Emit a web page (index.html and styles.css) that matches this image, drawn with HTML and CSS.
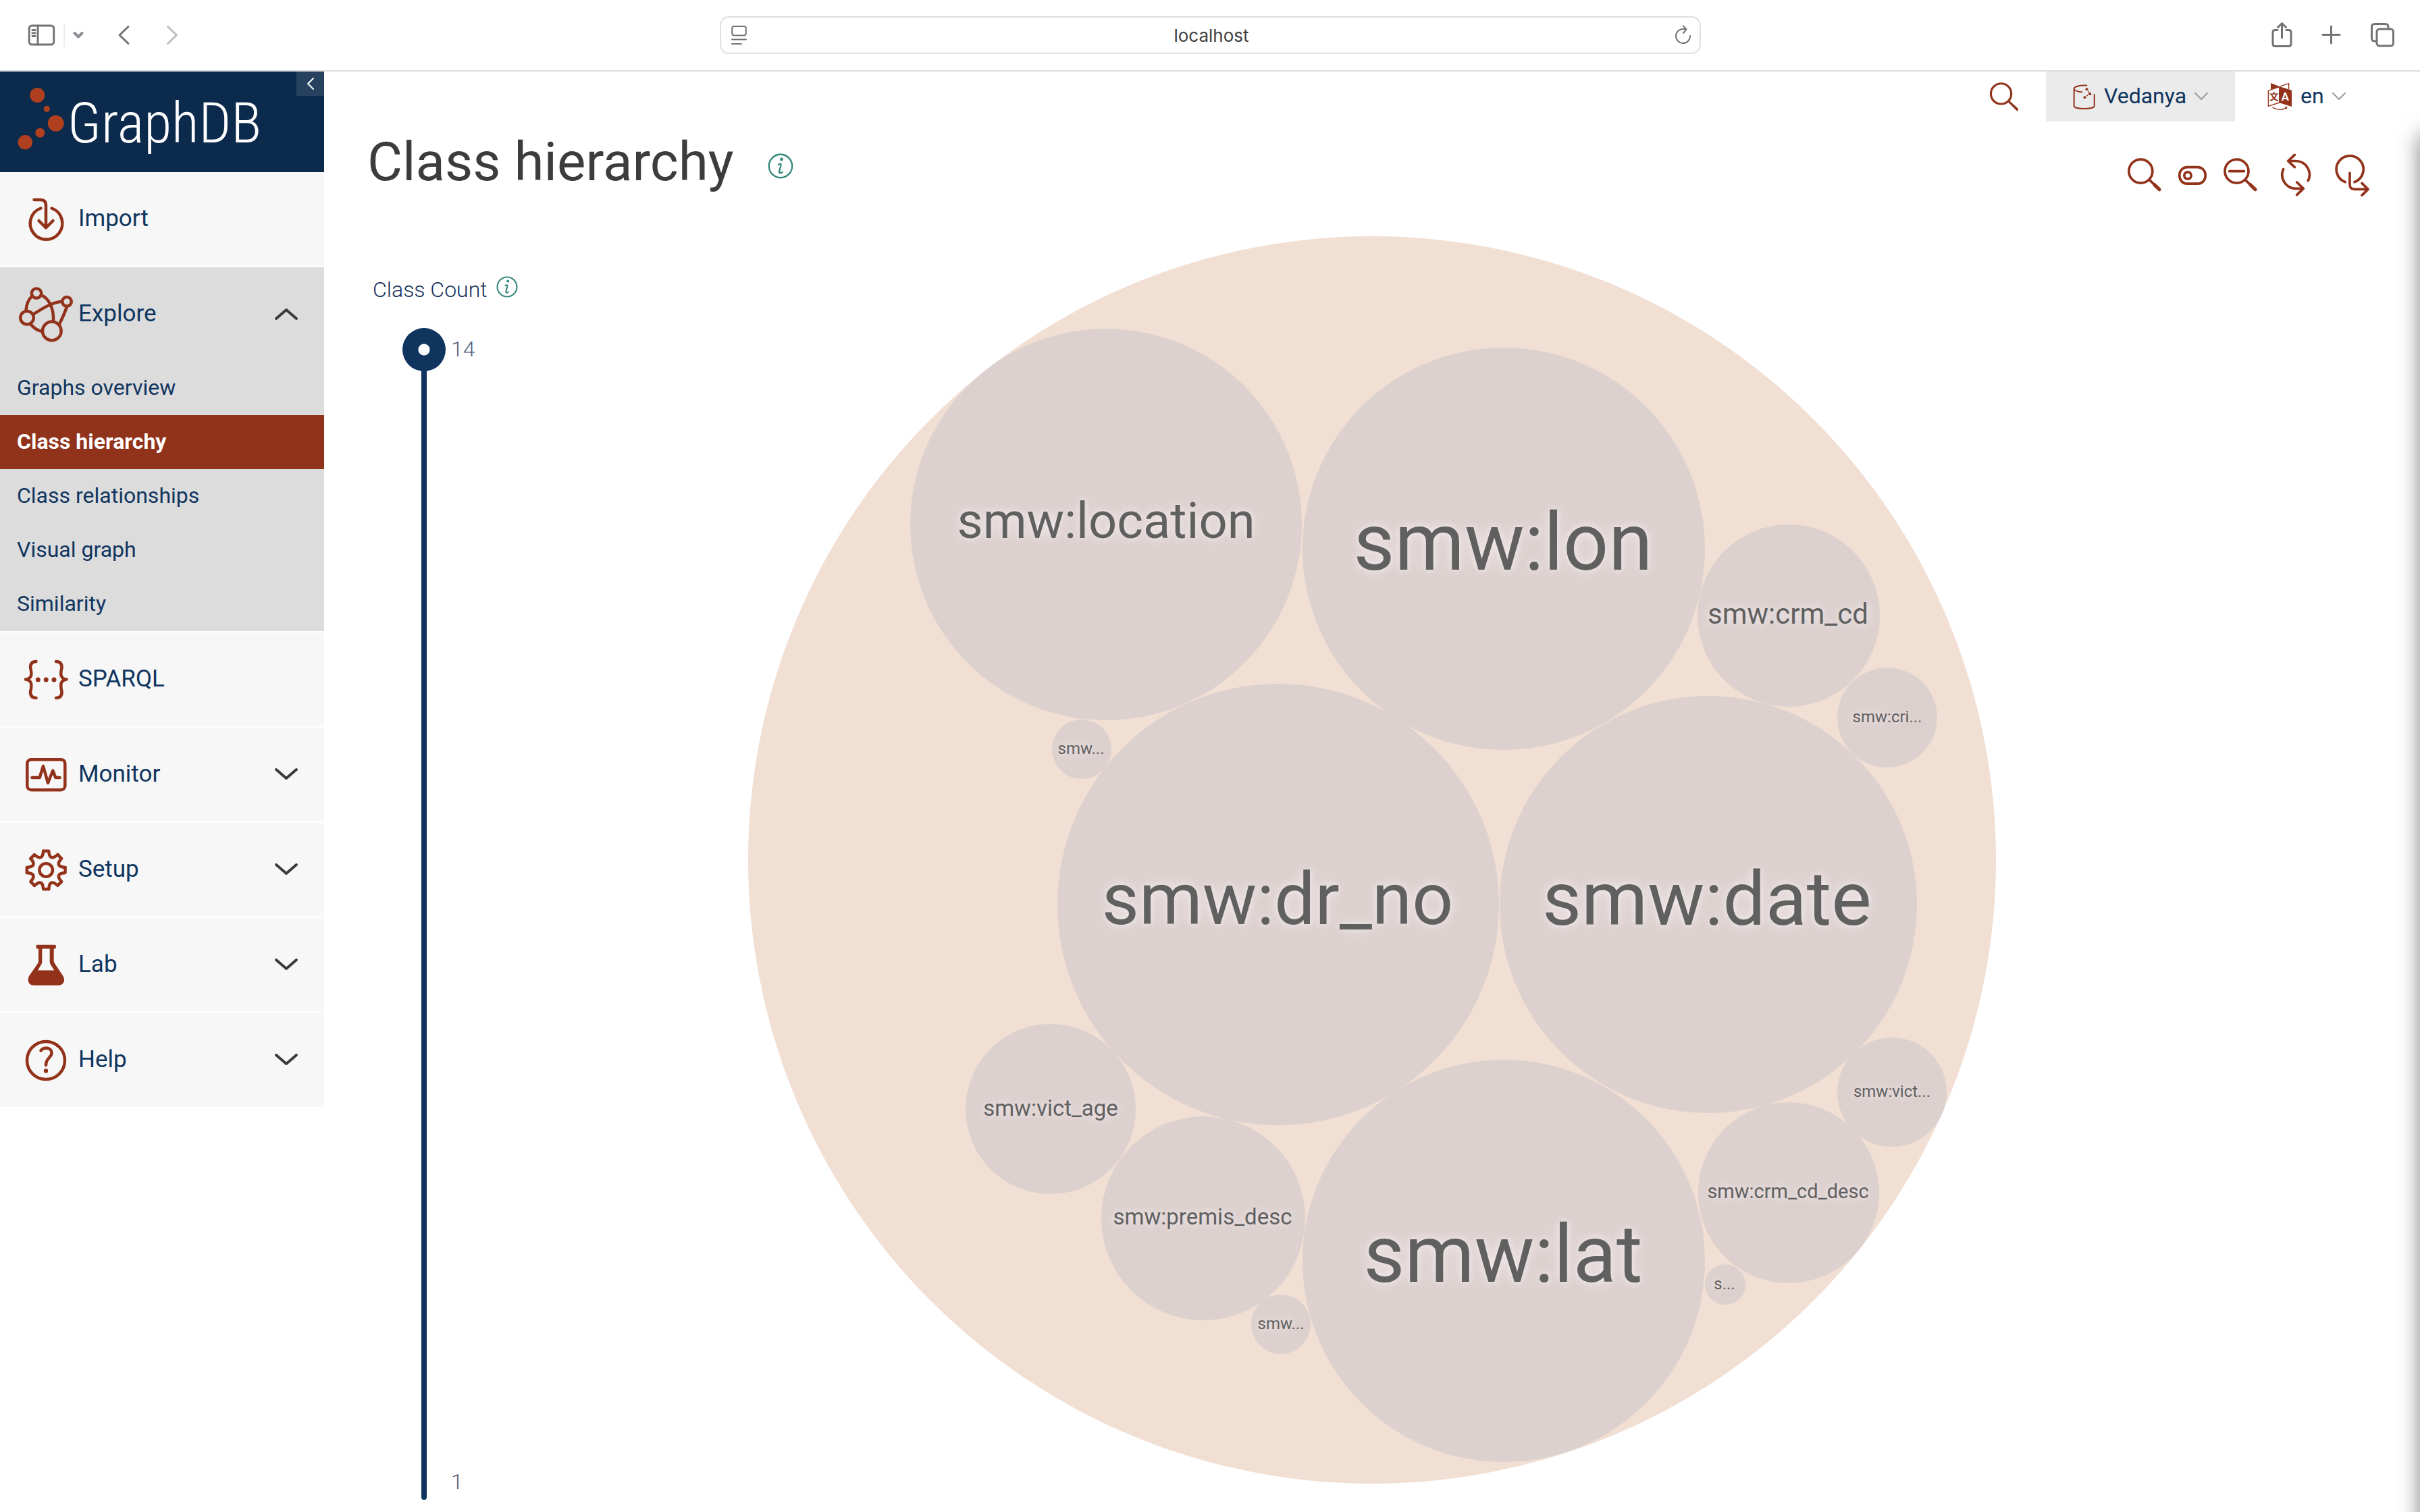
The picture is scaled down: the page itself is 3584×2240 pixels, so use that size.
FILE: index.html
```html
<!DOCTYPE html>
<html lang="en">
<head>
<meta charset="utf-8">
<title>Class hierarchy - GraphDB</title>
<link rel="stylesheet" href="styles.css">
</head>
<body>
<svg class="defs" aria-hidden="true">
  <symbol id="chev-down" viewBox="0 0 36 22"><path d="M3 4l15 13L33 4"/></symbol>
  <symbol id="chev-up" viewBox="0 0 36 22"><path d="M3 18L18 5l15 13"/></symbol>
  <symbol id="chev-small" viewBox="0 0 20 14"><path d="M1 2l9 9 9-9"/></symbol>
  <symbol id="info" viewBox="0 0 38 38"><circle cx="19" cy="19" r="17.2"/><path d="M16 17c2-2 4-2 3.500 1l-2.500 9c-.4 3 2 3 4.500 1"/><circle class="dot" cx="20.500" cy="9" r="1.200"/></symbol>
  <symbol id="magnifier" viewBox="390 399 156 156"><circle cx="451" cy="461" r="52.500"/><path d="M490 500l44 42"/><path class="thick" d="M512 521l22 21"/></symbol>
  <path id="tooth" d="M-4 -28.300H4L4.500 -24.500C5.500 -18.500 9.200 -17 14.100 -20.500L17.200 -22.800"/>
</svg>

<header class="browser">
  <div class="browser-side start">
    <button class="plain" aria-label="Show sidebar"><svg width="42" height="36" viewBox="41 33 42 36"><rect x="43.200" y="37" width="36.500" height="28" rx="4"/><path d="M56 37v28M48 43.500h4M48 48h4M48 52.500h4"/></svg></button>
    <span class="divider"></span>
    <button class="plain" aria-label="Tab groups"><svg class="faint" width="18" height="14" viewBox="107 45 18 14"><path d="M110.500 49l5.500 5.500 5.500-5.500"/></svg></button>
    <button class="plain back" aria-label="Back"><svg width="20" height="32" viewBox="173 35 20 32"><path d="M190 38.500L177 51l13 12.500"/></svg></button>
    <button class="plain forward" aria-label="Forward"><svg class="disabled" width="20" height="32" viewBox="245 35 20 32"><path d="M248.500 38.500L261.500 51l-13 12.500"/></svg></button>
  </div>
  <div class="address">
    <svg width="26" height="32" viewBox="1081 36 26 32"><rect x="1083.200" y="39" width="20.600" height="13.500" rx="3"/><path d="M1083 58.500h21M1083 65h14"/></svg>
    <input type="text" value="localhost" aria-label="Address">
    <button class="plain" aria-label="Reload"><svg width="28" height="32" viewBox="2480 37 28 32"><path d="M2504 54a10.500 10.500 0 1 1-8-9.700M2494 39.500l4.500 5-4.500 5.500"/></svg></button>
  </div>
  <div class="browser-side end">
    <button class="plain" aria-label="Share"><svg width="34" height="40" viewBox="3361 31 34 40"><path d="M3372 43.500h-3.500q-3.500 0-3.500 3.500v17q0 3.500 3.500 3.500h20q3.500 0 3.500-3.500v-17q0-3.500-3.500-3.500h-3.500M3378.500 55V34M3372.500 39.500l6-6 6 6"/></svg></button>
    <button class="plain" aria-label="New tab"><svg width="32" height="32" viewBox="3436 35 32 32"><path d="M3439 50.500h25M3451.500 38v25"/></svg></button>
    <button class="plain" aria-label="Tab overview"><svg width="38" height="38" viewBox="3509 32 38 38"><rect x="3519" y="42" width="24.500" height="25" rx="4"/><path d="M3519 60h-3q-4.500 0-4.500-4.500V39q0-4.500 4.500-4.500h15.500q4.500 0 4.500 4.500v3"/></svg></button>
  </div>
</header>

<div class="app">
  <aside class="sidebar">
    <div class="brand">
      <a class="logo" href="#">
        <svg width="76" height="96" viewBox="24 126 76 96" aria-hidden="true"><circle cx="55.300" cy="141" r="11"/><circle cx="69.300" cy="161.300" r="4.600"/><circle cx="82.700" cy="182.700" r="12"/><circle cx="59.300" cy="196.700" r="7"/><circle cx="37.300" cy="210.700" r="10.700"/></svg>
        <span>GraphDB</span>
      </a>
      <button class="collapse" aria-label="Collapse menu"><svg width="14" height="20" viewBox="452 114 14 20"><path d="M463 116l-8 8 8 8"/></svg></button>
    </div>
    <nav>
      <ul class="menu">
        <li><a class="item" href="#"><svg class="icon" viewBox="26 282 84 84"><path d="M60.500 308.500A23.800 23.800 0 1 0 76.500 308.500M50.500 296H60q8 0 8 8V337M57.500 327L68 337.500 78.500 327"/></svg><span>Import</span></a></li>
        <li class="open">
          <a class="item" href="#"><svg class="icon" viewBox="26 423 84 84"><circle cx="54" cy="434.600" r="7.200"/><circle cx="99" cy="446.800" r="6.800"/><circle cx="40" cy="470.700" r="9.800"/><circle cx="76.800" cy="490.400" r="13.800"/><path d="M47 439C42 444 39 451 38.500 460M61 437C72 442 80 456 79 476M50 465C62 458 76 448 92 446.500M99 454C96 464 93 470 88 480M45 480C50 486 56 490 63 491"/></svg><span>Explore</span><svg class="chev"><use href="#chev-up"/></svg></a>
          <ul class="submenu">
            <li><a href="#">Graphs overview</a></li>
            <li><a class="active" href="#" aria-current="page">Class hierarchy</a></li>
            <li><a href="#">Class relationships</a></li>
            <li><a href="#">Visual graph</a></li>
            <li><a href="#">Similarity</a></li>
          </ul>
        </li>
        <li><a class="item" href="#"><svg class="icon" viewBox="26 964 84 84"><path d="M53.500 980Q45 980 45 989 47 996 46 1001 44 1006 38 1006.500 44 1007 46 1012 47 1018 45 1025 45 1034 53.500 1034M83 980Q91.600 980 91.600 989 89.600 996 90.600 1001 92.600 1006 98.600 1006.500 92.600 1007 90.600 1012 89.600 1018 91.600 1025 91.600 1034 83 1034"/><g class="solid"><circle cx="56.300" cy="1007" r="3.500"/><circle cx="68.200" cy="1007" r="3.500"/><circle cx="80" cy="1007" r="3.500"/></g></svg><span>SPARQL</span></a></li>
        <li><a class="item" href="#"><svg class="icon" viewBox="26 1105 84 84"><rect x="40.300" y="1125.200" width="56" height="45" rx="6"/><path d="M47.500 1152H58.700L64 1135 71 1160 78.300 1141.500 82.300 1152H88.500"/></svg><span>Monitor</span><svg class="chev"><use href="#chev-down"/></svg></a></li>
        <li><a class="item" href="#"><svg class="icon" viewBox="-42.200 -43 84 84"><circle r="9.800"/><use href="#tooth"/><use href="#tooth" transform="rotate(45)"/><use href="#tooth" transform="rotate(90)"/><use href="#tooth" transform="rotate(135)"/><use href="#tooth" transform="rotate(180)"/><use href="#tooth" transform="rotate(225)"/><use href="#tooth" transform="rotate(270)"/><use href="#tooth" transform="rotate(315)"/></svg><span>Setup</span><svg class="chev"><use href="#chev-down"/></svg></a></li>
        <li><a class="item" href="#"><svg class="icon" viewBox="26 1387 84 84"><path class="solid" fill-rule="evenodd" d="M55 1399.700H81.500Q83 1400 83 1402.500T81.500 1405.500H79.700V1424Q80 1426 81.500 1428L93.500 1446Q97 1453 93 1457 91 1459.800 86 1459.800H50.500Q45.500 1459.800 43.500 1457 40 1453 43 1446L55.500 1428Q57 1426 57 1424V1405.500H55Q53.300 1405 53.300 1402.500T55 1399.700ZM62.300 1405.500V1425Q62 1428 60.500 1430L56 1437.500H80.300L75.500 1430Q74 1428 73.700 1425V1405.500Z"/></svg><span>Lab</span><svg class="chev"><use href="#chev-down"/></svg></a></li>
        <li><a class="item" href="#"><svg class="icon" viewBox="26 1528 84 84"><circle cx="68" cy="1571" r="28"/><path d="M60.500 1556.500C64 1551 76.500 1551 76.500 1560 76.500 1567 68 1567 68 1578"/><circle class="solid" cx="68" cy="1586.500" r="3.200"/></svg><span>Help</span><svg class="chev"><use href="#chev-down"/></svg></a></li>
      </ul>
    </nav>
  </aside>

  <main class="main">
    <div class="topbar">
      <button class="plain find" aria-label="Search RDF resources"><svg class="tool" width="45" height="45"><use href="#magnifier"/></svg></button>
      <button class="pick repo"><svg class="tool" width="35" height="39" viewBox="147 74 104 118"><g class="repo-lines"><path d="M213 82C175 80 154 88 154 97V174C154 190 245 190 245 174V120M154 97C156 106 170 110 192 112"/></g><g class="fill"><circle cx="211" cy="99" r="6"/><circle cx="225" cy="120" r="6.500"/><circle cx="202" cy="135" r="6"/><circle cx="219" cy="110" r="3"/><circle cx="213" cy="127" r="3"/></g></svg><span>Vedanya</span><svg class="chev-s"><use href="#chev-small"/></svg></button>
      <button class="pick lang"><svg class="tool" width="37" height="42" viewBox="1013 69 111 126" aria-hidden="true"><g class="fill"><path d="M1028 72L1066 87 1121 104V177L1066 160V90L1028 100Z"/><path d="M1089 179L1101 176 1099 189Z"/></g><g class="thin"><path d="M1017 106L1066 89V159L1017 175ZM1072 86L1108 74V98M1037 181Q1066 198 1093 184"/></g><text class="han" x="1042" y="147">文</text><text class="latin" x="1092" y="149">A</text></svg><span>en</span><svg class="chev-s"><use href="#chev-small"/></svg></button>
    </div>

    <div class="page-head">
      <h1>Class hierarchy</h1>
      <button class="plain" aria-label="About this page"><svg class="info" width="38" height="38"><use href="#info"/></svg></button>
      <div class="toolbar">
        <button class="plain" aria-label="Search class"><svg class="tool" width="52" height="64" viewBox="390 381 156 192"><circle cx="451" cy="461" r="52.500"/><path d="M490 500l44 42"/><path class="thick" d="M512 521l22 21"/></svg></button>
        <button class="plain" aria-label="Show or hide prefixes"><svg class="tool" width="42" height="64" viewBox="618 381 126 192"><rect x="623.500" y="443" width="115" height="73.500" rx="34"/><circle cx="660" cy="480" r="15.500"/></svg></button>
        <button class="plain" aria-label="Focus diagram"><svg class="tool" width="52" height="64" viewBox="816 381 156 192"><circle cx="877.500" cy="461" r="52.500"/><path d="M845 461h65M916 500l44 42"/><path class="thick" d="M938 521l22 21"/></svg></button>
        <button class="plain" aria-label="Reload diagram"><svg class="tool" width="64" height="64" viewBox="1044 381 192 192"><path d="M1106 415.500H1140A61 61 0 0 1 1195 503M1135 388l-29 27.500 29 27.500M1174 538H1140A61 61 0 0 1 1085 452M1145 510l29 28-29 28"/></svg></button>
        <button class="plain" aria-label="Export as SVG"><svg class="tool" width="54" height="64" viewBox="1308 381 162 192"><path d="M1360 509A60 60 0 1 1 1401 509M1380 469V520Q1380 541 1400 541H1460M1434 514l27 27-27 27"/></svg></button>
      </div>
    </div>

    <div class="workspace">
      <div class="counter">
        <div class="counter-head">
          <label for="count">Class Count</label>
          <svg class="info" width="32" height="32"><use href="#info"/></svg>
        </div>
        <div class="slider">
          <input id="count" type="range" min="1" max="14" value="14">
          <div class="limits"><span>14</span><span>1</span></div>
        </div>
      </div>
      <svg class="bubbles" viewBox="1108 350 1848 1848" role="img" aria-label="Class hierarchy diagram">
        <circle class="root" cx="2032" cy="1274" r="924"/>
        <g class="classes">
          <circle cx="1638" cy="777" r="290"/>
          <circle cx="2227" cy="813" r="298"/>
          <circle cx="2649" cy="912" r="135"/>
          <circle cx="2795" cy="1063" r="74"/>
          <circle cx="1602" cy="1110" r="44"/>
          <circle cx="1893" cy="1340" r="327"/>
          <circle cx="2530" cy="1340" r="309"/>
          <circle cx="2802" cy="1618" r="81"/>
          <circle cx="1556" cy="1643" r="126"/>
          <circle cx="1782" cy="1805" r="151"/>
          <circle cx="2649" cy="1767" r="134"/>
          <circle cx="2227" cy="1868" r="298"/>
          <circle cx="2555" cy="1903" r="30"/>
          <circle cx="1897" cy="1962" r="44"/>
        </g>
        <g class="labels">
          <text x="1638" y="797" font-size="74">smw:location</text>
          <text x="2226" y="844" font-size="118">smw:lon</text>
          <text x="2648" y="924" font-size="42">smw:crm_cd</text>
          <text x="2795" y="1070" font-size="24">smw:cri...</text>
          <text x="1601" y="1117" font-size="24">smw...</text>
          <text x="1892" y="1369" font-size="107">smw:dr_no</text>
          <text x="2528" y="1370" font-size="112">smw:date</text>
          <text x="2802" y="1625" font-size="24">smw:vict...</text>
          <text x="1556" y="1653" font-size="33">smw:vict_age</text>
          <text x="1781" y="1814" font-size="33">smw:premis_desc</text>
          <text x="2648" y="1775" font-size="29">smw:crm_cd_desc</text>
          <text x="2226" y="1899" font-size="118">smw:lat</text>
          <text x="2554" y="1910" font-size="24">s...</text>
          <text x="1897" y="1969" font-size="24">smw...</text>
        </g>
      </svg>
    </div>
    <aside class="drawer" aria-hidden="true"></aside>
  </main>
</div>
</body>
</html>
```

FILE: styles.css
```css
:root {
  --navy: #0f355f;
  --rust: #92321a;
  --grey: #737373;
}

* { box-sizing: border-box; }

body {
  margin: 0;
  min-height: 100vh;
  display: flex;
  flex-direction: column;
  background: #fff;
  color: var(--navy);
  font: 32px/40px Roboto, "Liberation Sans", sans-serif;
}

ul { list-style: none; margin: 0; padding: 0; }
a { color: inherit; text-decoration: none; }
svg { display: block; flex: none; fill: none; stroke-linecap: round; stroke-linejoin: round; }
.defs { position: absolute; width: 0; height: 0; }

button {
  border: 0;
  margin: 0;
  padding: 0;
  background: none;
  color: inherit;
  font: inherit;
}
.plain { display: flex; }

/* Browser toolbar */
.browser {
  display: grid;
  grid-template-columns: 1fr minmax(0, 1453px) 1fr;
  align-items: center;
  height: 106px;
  padding: 0 36px;
  border-bottom: 2px solid #dcdcdc;
  stroke: var(--grey);
}
.browser svg { stroke-width: 3; }
.browser-side { display: flex; align-items: center; }
.browser-side.start { padding-left: 5px; }
.browser-side.end { justify-content: flex-end; gap: 41px; }
.divider { width: 2px; height: 36px; margin: 0 11px 0 11px; background: #ececec; }
.browser .faint { stroke: #8c8c92; stroke-width: 4; }
.browser .disabled { stroke: #bdbdbd; }
.back { margin-left: 48px; }
.forward { margin-left: 52px; }
.address {
  display: flex;
  align-items: center;
  height: 56px;
  padding: 0 10px 0 14px;
  border: 2px solid #e0e0e0;
  border-radius: 14px;
}
.address svg { stroke-width: 2; }
.address input {
  flex: 1;
  min-width: 0;
  border: 0;
  padding: 2px 0 0 2px;
  background: none;
  color: #404040;
  font: 26px/32px Inter, sans-serif;
  text-align: center;
}

/* Sidebar */
.app { flex: 1; display: flex; align-items: stretch; }
.sidebar { flex: none; width: 480px; }
.brand {
  display: flex;
  justify-content: space-between;
  align-items: flex-start;
  height: 149px;
  background: #0c2a4b;
}
.logo { display: flex; align-items: flex-start; padding: 20px 0 0 24px; color: #fff; }
.logo svg { fill: #b03f20; }
.logo span { font: 300 84px/96px "Roboto Condensed", Roboto, sans-serif; padding-top: 9px; }
.collapse {
  display: grid;
  place-items: center;
  width: 41px;
  height: 36px;
  background: #27425e;
}
.collapse svg { stroke: #fff; stroke-width: 2; }

.menu > li { background: #f7f7f7; border-bottom: 2px solid #fff; }
.menu > li:last-child { border-bottom: 0; }
.menu > .open { background: #dcdcdc; }
.item {
  display: flex;
  align-items: center;
  gap: 6px;
  height: 139px;
  padding: 0 38px 1px 26px;
  font-size: 35px;
}
.item span { flex: 1; }
.icon { width: 84px; height: 84px; stroke: var(--rust); stroke-width: 4.5; }
.icon .solid { fill: var(--rust); stroke: none; }
.chev { width: 36px; height: 22px; stroke: #3b3b3d; stroke-width: 4; }
.submenu a { display: block; height: 80px; padding-left: 25px; line-height: 78px; }
.submenu .active { background: #91321a; color: #fff; font-weight: 700; }

/* Main column */
.main { position: relative; flex: 1; min-width: 0; overflow: hidden; padding-bottom: 18px; }
.tool { stroke: var(--rust); stroke-width: 11; }
.tool .thick { stroke-width: 15; }
.tool .fill { fill: var(--rust); stroke: none; }
.tool .thin { stroke-width: 4; }
.tool .repo-lines { stroke-width: 6; stroke-linecap: butt; }
.tool text { stroke: none; text-anchor: middle; }
.tool .han { fill: var(--rust); font: 700 42px "Noto Sans CJK JP", sans-serif; }
.tool .latin { fill: #fff; font: 700 50px Roboto, sans-serif; }

.topbar { display: flex; justify-content: flex-end; height: 74px; }
.find { align-items: center; width: 84px; }
.pick { display: flex; align-items: center; gap: 12px; height: 74px; }
.pick span { padding-bottom: 3px; }
.repo { width: 280px; padding-left: 39px; background: #ebebeb; }
.lang { width: 274px; padding-left: 48px; }
.chev-s { width: 20px; height: 14px; stroke: #9a9a9a; stroke-width: 2; }

.page-head {
  display: flex;
  align-items: flex-start;
  padding: 12px 74px 59px 64px;
}
h1 {
  margin: 0 50px 0 0;
  color: #3b3c3d;
  font-size: 80px;
  font-weight: 400;
  line-height: 96px;
}
.page-head > .plain { padding-top: 35px; }
.info { stroke: #34877c; stroke-width: 2.4; }
.info .dot, #info .dot { fill: #34877c; }
.toolbar { display: flex; gap: 24px; margin-left: auto; padding-top: 35px; }

.workspace {
  display: grid;
  grid-template-columns: minmax(auto, 1fr) minmax(0, 1848px) 1fr;
}
.counter { display: flex; flex-direction: column; padding: 59px 0 0 72px; }
.counter-head { display: flex; gap: 13px; margin-bottom: 37px; color: #15305c; font-weight: 300; }
.slider { flex: 1; display: flex; align-items: stretch; gap: 8px; padding-left: 44px; }
.limits {
  display: flex;
  flex-direction: column;
  justify-content: space-between;
  padding-top: 4px;
  color: #54617f;
  font-weight: 300;
  line-height: 54px;
}
.slider input {
  appearance: none;
  writing-mode: vertical-lr;
  direction: rtl;
  width: 64px;
  height: auto;
  min-height: 0;
  margin: 0;
  background: none;
}
.slider input::-webkit-slider-runnable-track {
  width: 8px;
  border-radius: 4px;
  background: var(--navy);
}
.slider input::-webkit-slider-thumb {
  appearance: none;
  width: 64px;
  height: 64px;
  margin-left: -28px;
  border-radius: 50%;
  background: radial-gradient(circle, #fff 8px, var(--navy) 9px);
}

.bubbles { align-self: start; width: 100%; height: auto; margin-bottom: 24px; }
.root { fill: #f2dfd3; }
.classes { fill: #dcd1cf; }
.labels {
  fill: #606060;
  text-anchor: middle;
  text-shadow: 0 0 20px rgba(255, 246, 250, .7), 0 0 10px rgba(255, 246, 250, .5);
}

/* Closed drawer: only its shadow reaches into the page */
.drawer {
  position: absolute;
  top: 94px;
  bottom: -40px;
  right: -40px;
  width: 40px;
  box-shadow: 0 0 32px rgba(0, 0, 0, .5);
}
```
